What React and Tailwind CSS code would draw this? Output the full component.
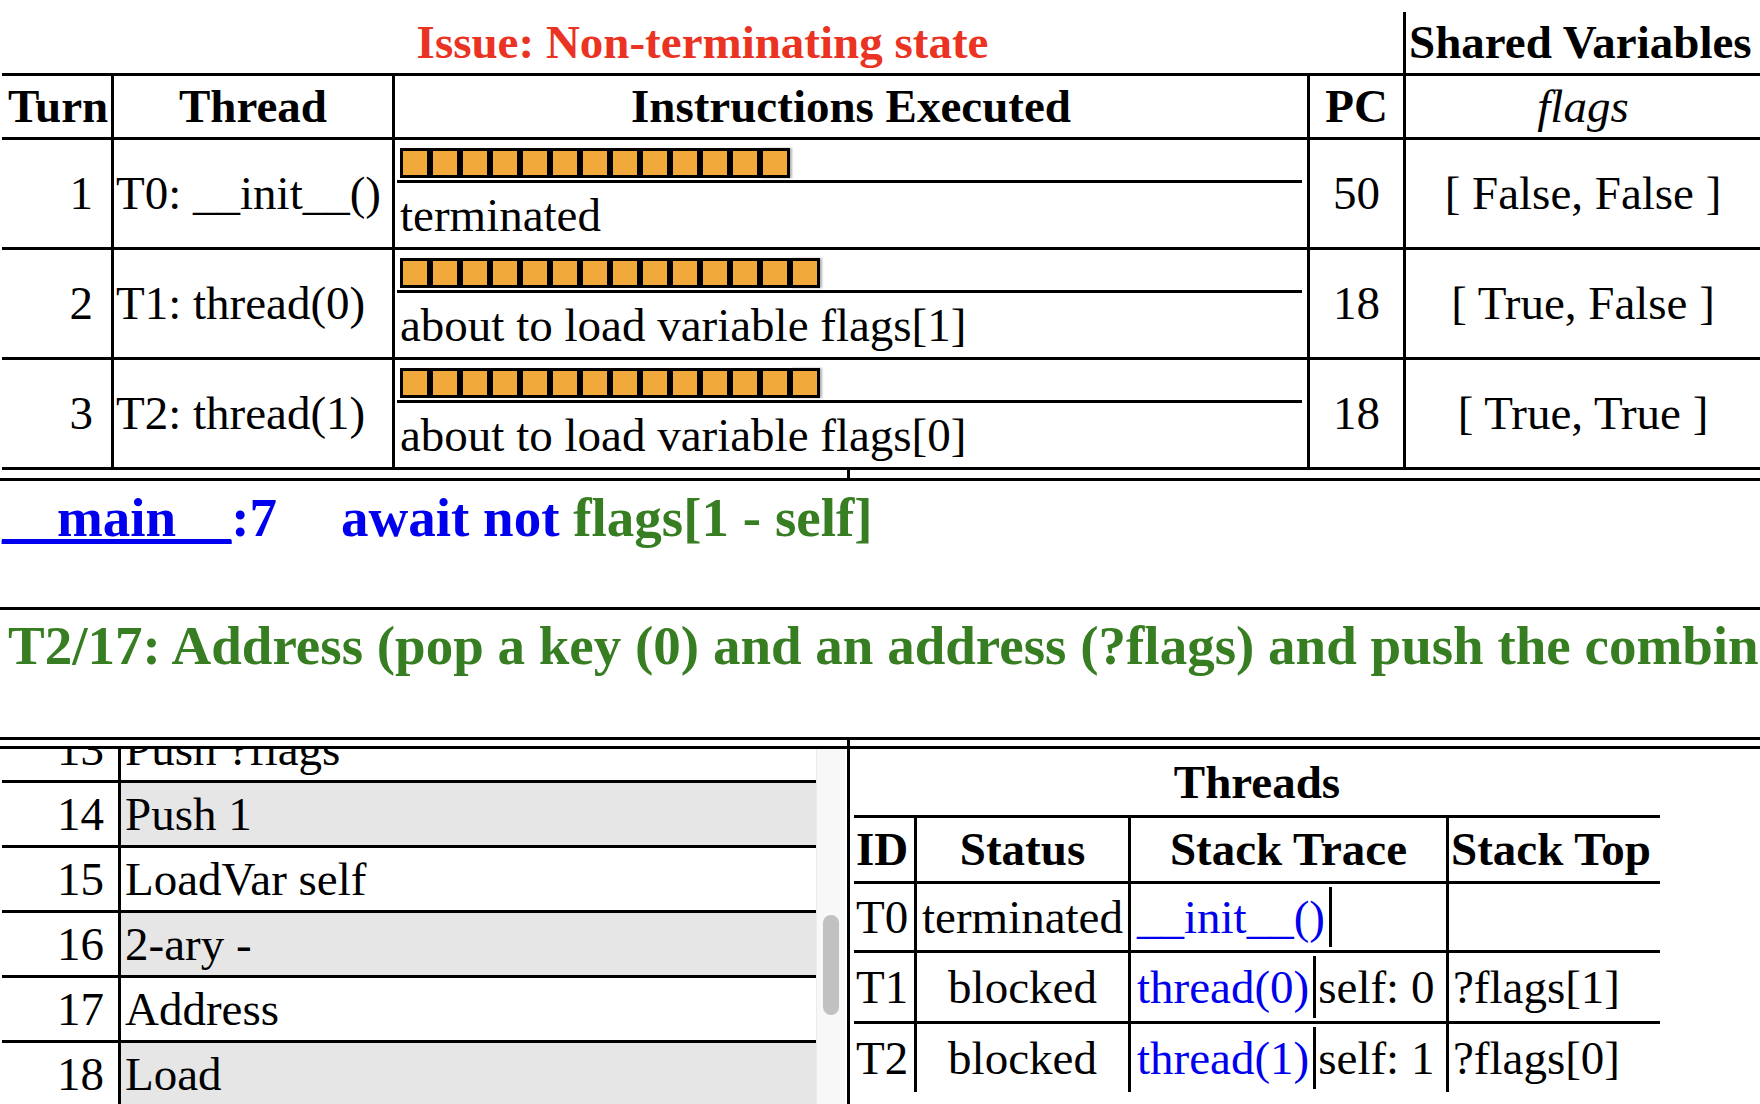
import React from "react";

const rows = [
  { turn: 1, thread: "T0: __init__()", blocks: 13, text: "terminated", pc: 50, flags: "[ False, False ]" },
  { turn: 2, thread: "T1: thread(0)", blocks: 14, text: "about to load variable flags[1]", pc: 18, flags: "[ True, False ]" },
  { turn: 3, thread: "T2: thread(1)", blocks: 14, text: "about to load variable flags[0]", pc: 18, flags: "[ True, True ]" },
];

const code = [
  { n: 13, op: "Push ?flags" },
  { n: 14, op: "Push 1" },
  { n: 15, op: "LoadVar self" },
  { n: 16, op: "2-ary -" },
  { n: 17, op: "Address" },
  { n: 18, op: "Load" },
];

const threads = [
  { id: "T0", status: "terminated", frame: "__init__()", vars: null, top: "" },
  { id: "T1", status: "blocked", frame: "thread(0)", vars: "self: 0", top: "?flags[1]" },
  { id: "T2", status: "blocked", frame: "thread(1)", vars: "self: 1", top: "?flags[0]" },
];

const Bar = ({ n }) => (
  <div className="flex h-[30px]">
    {Array.from({ length: n }).map((_, i) => (
      <div
        key={i}
        className={
          "h-[30px] w-[30px] border-[3px] border-black bg-[#f2a93b]" +
          (i === n - 1 ? " shadow-[2px_0_2px_rgba(0,0,0,0.3)]" : "")
        }
      />
    ))}
  </div>
);

const TraceTable = () => (
  <div className="ml-[2px] mt-[12px]">
    {/* title row */}
    <div className="flex h-[64px] border-b-[3px] border-black">
      <div className="flex w-[1404px] shrink-0 items-center justify-center border-r-[3px] border-black font-bold text-[#ea3323]">
        Issue: Non-terminating state
      </div>
      <div className="flex items-center whitespace-nowrap pl-[3px] font-bold">Shared Variables</div>
    </div>

    {/* header row */}
    <div className="flex h-[64px] border-b-[3px] border-black font-bold">
      <div className="flex w-[112px] shrink-0 items-center border-r-[3px] border-black pl-[6px]">Turn</div>
      <div className="flex w-[281px] shrink-0 items-center justify-center border-r-[3px] border-black">Thread</div>
      <div className="flex w-[915px] shrink-0 items-center justify-center border-r-[3px] border-black">
        Instructions Executed
      </div>
      <div className="flex w-[96px] shrink-0 items-center justify-center border-r-[3px] border-black">PC</div>
      <div className="flex flex-1 items-center justify-center font-normal italic">flags</div>
    </div>

    {rows.map((r) => (
      <div key={r.turn} className="flex h-[110px] border-b-[3px] border-black">
        <div className="flex w-[112px] shrink-0 items-center justify-end border-r-[3px] border-black pr-[18px]">
          {r.turn}
        </div>
        <div className="flex w-[281px] shrink-0 items-center whitespace-nowrap border-r-[3px] border-black pl-[2px]">
          {r.thread}
        </div>
        <div className="flex w-[915px] shrink-0 flex-col border-r-[3px] border-black pl-[2px] pr-[5px]">
          <div className="h-[43px] border-b-[3px] border-black pl-[3px] pt-[8px]">
            <Bar n={r.blocks} />
          </div>
          <div className="flex flex-1 items-center whitespace-nowrap pl-[3px]">{r.text}</div>
        </div>
        <div className="flex w-[96px] shrink-0 items-center justify-center border-r-[3px] border-black">{r.pc}</div>
        <div className="flex flex-1 items-center justify-center whitespace-nowrap">{r.flags}</div>
      </div>
    ))}
  </div>
);

const Listing = () => (
  <div className="flex w-[847px] shrink-0">
    <div className="ml-[2px] w-[814px] overflow-hidden">
      <div className="mt-[-34px]">
        {code.map((c) => (
          <div key={c.n} className="flex h-[65px] border-t-[3px] border-black">
            <div className="flex w-[116px] shrink-0 items-center justify-end pr-[14px]">{c.n}</div>
            <div
              className={
                "flex flex-1 items-center border-l-[3px] border-black pl-[4px] " +
                (c.n % 2 === 0 ? "bg-[#e6e6e6]" : "bg-white")
              }
            >
              {c.op}
            </div>
          </div>
        ))}
      </div>
    </div>
    {/* scrollbar */}
    <div className="w-[29px] shrink-0 border-l border-[#ececec] bg-[#f8f8f8]">
      <div className="ml-[6px] mt-[166px] h-[100px] w-[16px] rounded-full bg-[#c1c1c1]" />
    </div>
  </div>
);

const Threads = () => (
  <div className="flex-1 border-l-[3px] border-black pl-[4px]">
    <div className="w-[806px]">
      <div className="flex h-[66px] items-center justify-center font-bold">Threads</div>
      <div className="flex h-[66px] border-t-[3px] border-black font-bold">
        <div className="flex w-[63px] shrink-0 items-center border-r-[3px] border-black pl-[2px]">ID</div>
        <div className="flex w-[214px] shrink-0 items-center justify-center border-r-[3px] border-black">Status</div>
        <div className="flex w-[318px] shrink-0 items-center justify-center border-r-[3px] border-black">
          Stack Trace
        </div>
        <div className="flex flex-1 items-center whitespace-nowrap pl-[2px]">Stack Top</div>
      </div>
      {threads.map((t, i) => (
        <div
          key={t.id}
          className={"flex border-t-[3px] border-black " + (i === 0 ? "h-[69px]" : "h-[71px]")}
        >
          <div className="flex w-[63px] shrink-0 items-center border-r-[3px] border-black pl-[2px]">{t.id}</div>
          <div className="flex w-[214px] shrink-0 items-center justify-center border-r-[3px] border-black">
            {t.status}
          </div>
          <div className="flex w-[318px] shrink-0 border-r-[3px] border-black py-[3px]">
            <div className="flex items-center whitespace-nowrap border-r-[3px] border-black pl-[6px] pr-[4px] text-[#0000ee]">
              {t.frame}
            </div>
            {t.vars && <div className="flex items-center whitespace-nowrap pl-[2px]">{t.vars}</div>}
          </div>
          <div className="flex flex-1 items-center whitespace-nowrap pl-[4px]">{t.top}</div>
        </div>
      ))}
    </div>
  </div>
);

export default function App() {
  return (
    <div className="h-[1104px] w-[1760px] overflow-hidden bg-white font-['Liberation_Serif',serif] text-[47px] leading-none text-black">
      <TraceTable />

      <div className="h-[8px] w-[850px] border-r-[3px] border-black" />

      {/* source line */}
      <div className="h-[129px] whitespace-nowrap border-t-[3px] border-black pl-[2px] pt-[6px] text-[55px] font-bold leading-[62px]">
        <a href="#" className="text-[#0000ee] underline">
          __main__
        </a>
        <span className="text-[#0000ee]">:7</span>
        <span className="ml-[64px] text-[#0000ee]">await not </span>
        <span className="text-[#377d22]">flags[1 - self]</span>
      </div>

      {/* instruction description */}
      <div className="h-[130px] whitespace-nowrap border-t-[3px] border-black pl-[8px] pt-[5px] text-[55px] font-bold leading-[62px] text-[#377d22]">
        T2/17: Address (pop a key (0) and an address (?flags) and push the combined address)
      </div>

      <div className="flex h-[9px] border-t-[3px] border-black">
        <div className="w-[850px] border-r-[3px] border-black" />
      </div>

      <div className="flex h-[358px] border-t-[3px] border-black">
        <Listing />
        <Threads />
      </div>
    </div>
  );
}
